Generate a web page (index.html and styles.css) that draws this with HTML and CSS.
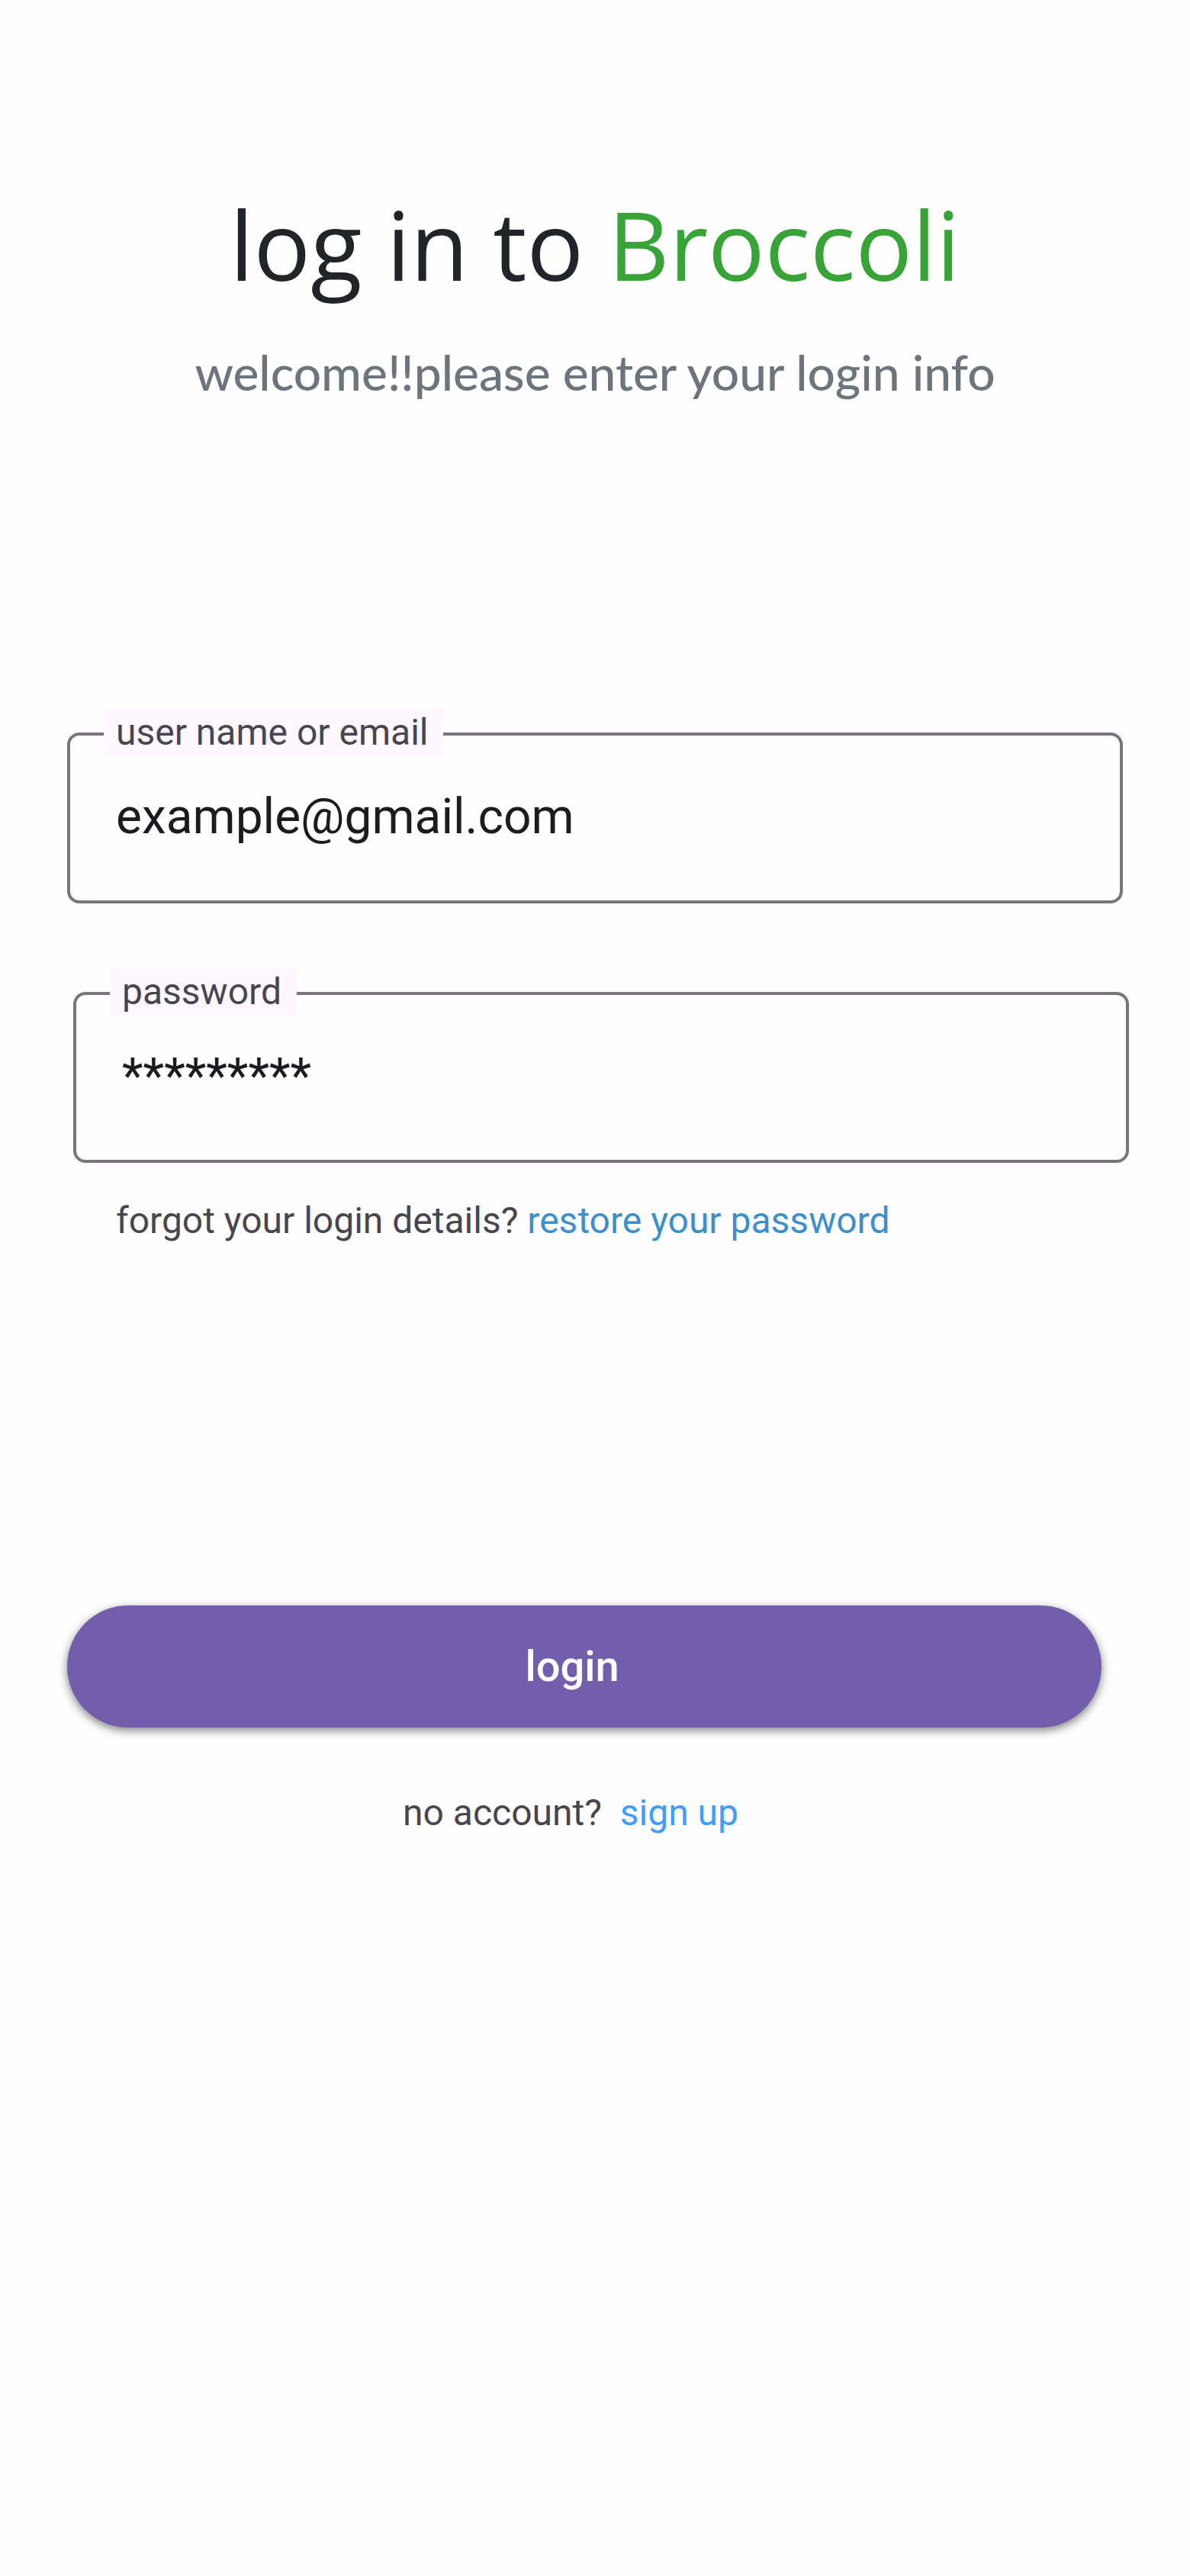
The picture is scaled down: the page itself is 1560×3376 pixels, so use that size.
FILE: index.html
```html
<!DOCTYPE html>
<html lang="en">
<head>
<meta charset="utf-8">
<meta name="viewport" content="width=device-width, initial-scale=1">
<title>Broccoli – log in</title>
<link rel="stylesheet" href="styles.css">
</head>
<body>
<main class="login">
  <header class="intro">
    <h1 class="title">log in to <span class="brand">Broccoli</span></h1>
    <p class="welcome">welcome!!please enter your login info</p>
  </header>
  <form class="form">
    <div class="fields">
      <div class="field">
        <label class="field-label" for="user">user name or email</label>
        <input class="field-input" id="user" type="text" value="example@gmail.com">
      </div>
      <div class="field field-password">
        <label class="field-label" for="password">password</label>
        <input class="field-input" id="password" type="text" value="*********">
      </div>
      <p class="note">forgot your login details? <a class="restore" href="#restore">restore your password</a></p>
    </div>
    <div class="actions">
      <button class="submit" type="submit">login</button>
      <p class="signup">no account? <a class="signup-link" href="#signup">sign up</a></p>
    </div>
  </form>
</main>
</body>
</html>
```
FILE: styles.css
```css
* {
  box-sizing: border-box;
}

body {
  margin: 0;
  min-height: 100vh;
  background: #fefefe;
  color: #49454f;
  font-family: Roboto, sans-serif;
}

h1,
p {
  margin: 0;
}

a {
  text-decoration: none;
}

.login {
  padding: 232px 80px 0 88px;
}

.intro {
  padding-right: 8px;
  text-align: center;
}

.title {
  color: #212529;
  font: 400 124px/176px "Open Sans", sans-serif;
}

.brand {
  color: #38a336;
}

.welcome {
  margin-top: 32px;
  color: #6c757d;
  font: 500 64px/96px Lato, sans-serif;
}

.fields {
  padding-top: 392px;
}

.field {
  display: grid;
  margin-right: 8px;
}

.field-password {
  margin: 84px 0 0 8px;
}

.field-label {
  z-index: 1;
  justify-self: start;
  margin: 0 0 -32px 48px;
  padding: 0 20px 0 16px;
  background: #fef7ff;
  font-size: 48px;
  line-height: 64px;
}

.field-input {
  width: 100%;
  height: 224px;
  padding: 0 60px 4px;
  border: 4px solid #79747e;
  border-radius: 16px;
  background: transparent;
  color: #1d1b20;
  font: 400 64px/96px Roboto, sans-serif;
}

.note {
  padding: 44px 64px 0;
  font-size: 48px;
  line-height: 64px;
}

.restore {
  color: #3c8fcd;
}

.actions {
  margin: 472px 36px 0 0;
  text-align: center;
}

.submit {
  width: 100%;
  height: 160px;
  padding: 0 32px 0 0;
  border: 0;
  border-radius: 80px;
  background: #735eab;
  color: #fff;
  font: 500 56px/80px Roboto, sans-serif;
  box-shadow: 0 4px 8px rgba(0, 0, 0, 0.3), 0 4px 12px 4px rgba(0, 0, 0, 0.15);
}

.signup {
  margin: 80px 0;
  padding-right: 36px;
  font-size: 48px;
  line-height: 64px;
}

.signup-link {
  margin-left: 12px;
  color: #409cff;
}
```
